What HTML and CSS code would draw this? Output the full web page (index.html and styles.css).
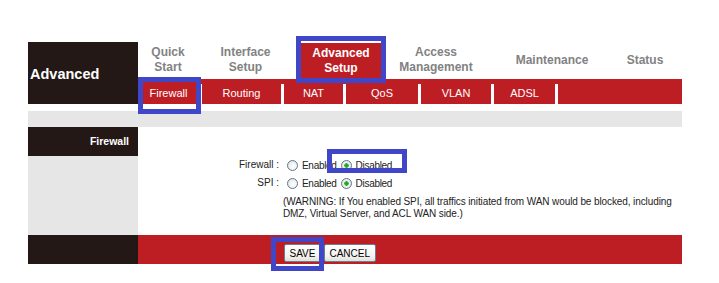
FILE: index.html
```html
<!DOCTYPE html>
<html>
<head>
<meta charset="utf-8">
<link rel="stylesheet" href="styles.css">
</head>
<body>
<div class="page">
  <div class="header">
    <div class="brand">Advanced</div>
    <div class="menu">
      <div class="mi mi-quick">Quick<br>Start</div>
      <div class="mi mi-iface">Interface<br>Setup</div>
      <div class="mi mi-adv active">Advanced<br>Setup</div>
      <div class="mi mi-access">Access<br>Management</div>
      <div class="mi mi-maint">Maintenance</div>
      <div class="mi mi-status">Status</div>
    </div>
    <div class="tabs">
      <div class="tab t-fw active">Firewall</div>
      <div class="tab t-rt">Routing</div>
      <div class="tab t-nat">NAT</div>
      <div class="tab t-qos">QoS</div>
      <div class="tab t-vlan">VLAN</div>
      <div class="tab t-adsl">ADSL</div>
    </div>
  </div>
  <div class="greybar"></div>
  <div class="content">
    <div class="side">
      <div class="side-title">Firewall</div>
    </div>
    <div class="form">
      <div class="lbl">Firewall :</div>
      <div class="val">
        <label><input type="radio" name="fw"> Enabled</label>
        <label><input type="radio" name="fw" checked> Disabled</label>
      </div>
      <div class="lbl">SPI :</div>
      <div class="val">
        <label><input type="radio" name="spi"> Enabled</label>
        <label><input type="radio" name="spi" checked> Disabled</label>
      </div>
      <div class="lbl"></div>
      <div class="warn">(WARNING: If You enabled SPI, all traffics initiated from WAN would be blocked, including<br>DMZ, Virtual Server, and ACL WAN side.)</div>
    </div>
  </div>
  <div class="footer">
    <div class="foot-side"></div>
    <div class="foot-main">
      <button class="btn">SAVE</button>
      <button class="btn">CANCEL</button>
    </div>
  </div>
</div>
<div class="mark mark-adv"></div>
<div class="mark mark-fw"></div>
<div class="mark mark-dis"></div>
<div class="mark mark-save"></div>
</body>
</html>
```
FILE: styles.css
```css
html, body {
  margin: 0;
  padding: 0;
  background: #fff;
}
body {
  position: relative;
  width: 719px;
  height: 283px;
  overflow: hidden;
  font-family: "Liberation Sans", Arial, sans-serif;
}
.page {
  padding: 42px 0 0 28px;
  width: 654px;
}
.header {
  display: grid;
  grid-template-columns: 110px 544px;
  grid-template-rows: 37px 25px;
}
.brand {
  grid-row: 1 / 3;
  background: #231815;
  color: #fff;
  font-weight: bold;
  font-size: 14.5px;
  display: flex;
  align-items: center;
  padding-left: 2px;
  padding-top: 1px;
}
.menu {
  display: flex;
  align-items: stretch;
}
.mi {
  color: #828282;
  font-weight: bold;
  font-size: 12px;
  line-height: 15px;
  text-align: center;
  display: flex;
  align-items: center;
  justify-content: center;
  padding-bottom: 1px;
}
.mi-quick { width: 60px; }
.mi-iface { width: 95px; }
.mi-adv { width: 80px; margin-left: 8px; margin-top: 1px; }
.mi-access { width: 110px; }
.mi-maint { width: 122px; }
.mi-status { width: 64px; }
.mi.active {
  background: #bd1e24;
  color: #fff;
}
.tabs {
  background: #bd1e24;
  display: flex;
  padding-top: 5px;
}
.tab {
  color: #fff;
  font-size: 11px;
  line-height: 18px;
  text-align: center;
  border-right: 3px solid #fff;
}
.t-fw { width: 61px; }
.t-rt { width: 79px; }
.t-nat { width: 59px; }
.t-qos { width: 72px; }
.t-vlan { width: 70px; }
.t-adsl { width: 61px; }
.greybar {
  margin-top: 7px;
  height: 16px;
  background: #e6e6e6;
}
.content {
  display: grid;
  grid-template-columns: 110px 544px;
  height: 108px;
}
.side {
  background: #e6e6e6;
}
.side-title {
  background: #231815;
  color: #fff;
  font-weight: bold;
  font-size: 10.5px;
  height: 29px;
  line-height: 29px;
  text-align: right;
  padding-right: 9px;
}
.form {
  display: grid;
  grid-template-columns: 145px 1fr;
  grid-auto-rows: 18px;
  padding-top: 29px;
  font-size: 10px;
  color: #222;
  align-content: start;
}
.lbl {
  text-align: right;
  line-height: 18px;
  padding-right: 4px;
}
.val {
  display: flex;
  align-items: center;
  padding-left: 4px;
  letter-spacing: -0.3px;
}
.val label {
  display: flex;
  align-items: center;
  margin-right: 4px;
}
input[type=radio] {
  -webkit-appearance: none;
  appearance: none;
  width: 11px;
  height: 11px;
  margin: 0 4px 0 0;
  border: 1px solid #5f7891;
  border-radius: 50%;
  background: radial-gradient(circle at 60% 60%, #ffffff 0, #f2f2f2 45%, #d6d6d6 100%);
  box-sizing: border-box;
}
input[type=radio]:checked {
  background: radial-gradient(circle, #1aa51a 0, #2db42d 2px, #f4f4f4 2.5px, #dcdcdc 100%);
}
.warn {
  grid-row: span 2;
  line-height: 12px;
  padding-top: 4px;
  color: #222;
  letter-spacing: -0.1px;
  white-space: nowrap;
}
.footer {
  display: grid;
  grid-template-columns: 110px 544px;
  height: 29px;
}
.foot-side {
  background: #231815;
}
.foot-main {
  background: #bd1e24;
  padding: 9px 0 0 146px;
  display: flex;
  align-items: flex-start;
  gap: 3px;
}
.btn {
  height: 18px;
  padding: 0 4.5px;
  margin: 0;
  font-family: "Liberation Sans", Arial, sans-serif;
  font-size: 10px;
  color: #000;
  border: 1px solid #6b7d92;
  border-radius: 2px;
  background: linear-gradient(#ffffff, #f3f2ee 70%, #e2e0d8);
}
.mark {
  position: absolute;
  border: 5px solid #4046c8;
  box-sizing: border-box;
}
.mark-adv { left: 296px; top: 36px; width: 90px; height: 47px; }
.mark-fw { left: 138px; top: 77px; width: 63px; height: 37px; }
.mark-dis { left: 327px; top: 149px; width: 80px; height: 24px; }
.mark-save { left: 271px; top: 237px; width: 53px; height: 34px; }
```
